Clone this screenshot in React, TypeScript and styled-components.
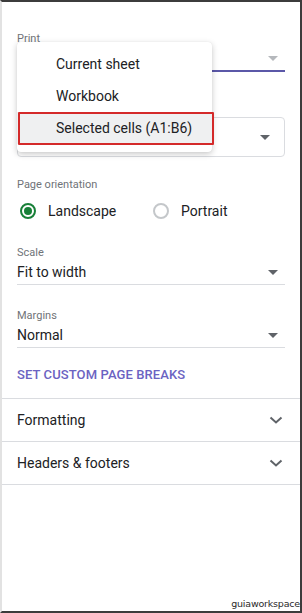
import styled, { createGlobalStyle } from 'styled-components';

const GlobalStyle = createGlobalStyle`
  html, body {
    margin: 0;
    padding: 0;
    background: #ffffff;
  }
  * {
    box-sizing: border-box;
  }
`;

const Frame = styled.div`
  position: relative;
  width: 302px;
  height: 613px;
  border-top: 2px solid #3c3c3c;
  border-right: 2px solid #3c3c3c;
  border-bottom: 2px solid #3c3c3c;
  border-left: 2px solid #e2e2e2;
  background: #ffffff;
  font-family: Roboto, 'Liberation Sans', Arial, sans-serif;
  color: #202124;
  overflow: hidden;
`;

const Content = styled.div`
  position: relative;
  padding: 30px 15px 0 15px;
`;

const Label = styled.div`
  font-size: 11px;
  line-height: 14px;
  color: #6f7378;
`;

const SelectRow = styled.div<{ $active?: boolean; $height?: number }>`
  display: flex;
  align-items: center;
  justify-content: space-between;
  height: ${(p) => p.$height ?? 25}px;
  padding-right: 7px;
  font-size: 14px;
  color: #202124;
  border-bottom: ${(p) => (p.$active ? '2px solid #5b58a8' : '1px solid #dadce0')};
`;

const OutlinedSelect = styled.div`
  display: flex;
  align-items: center;
  justify-content: flex-end;
  height: 40px;
  margin-top: 45px;
  padding-right: 14px;
  border: 1px solid #dadce0;
  border-radius: 4px;
`;

const Caret = styled.span<{ $dark?: boolean }>`
  width: 0;
  height: 0;
  border-left: 5px solid transparent;
  border-right: 5px solid transparent;
  border-top: 5px solid ${(p) => (p.$dark ? '#5f6368' : '#b5b8bc')};
`;

const Section = styled.div<{ $top: number }>`
  margin-top: ${(p) => p.$top}px;
`;

const RadioGroup = styled.div`
  display: grid;
  grid-template-columns: 133px auto;
  align-items: center;
  height: 24px;
  margin-top: 7px;
  padding-left: 3px;
`;

const RadioOption = styled.label`
  display: flex;
  align-items: center;
  gap: 12px;
  font-size: 14px;
  color: #202124;
`;

const RadioCircle = styled.span<{ $checked?: boolean }>`
  display: flex;
  align-items: center;
  justify-content: center;
  width: 16px;
  height: 16px;
  border-radius: 50%;
  border: 2px solid ${(p) => (p.$checked ? '#188038' : '#c4c7ca')};

  &::after {
    content: '';
    display: ${(p) => (p.$checked ? 'block' : 'none')};
    width: 8px;
    height: 8px;
    border-radius: 50%;
    background: #188038;
  }
`;

const LinkButton = styled.div`
  margin-top: 19px;
  padding-bottom: 15px;
  font-size: 13px;
  line-height: 16px;
  font-weight: 500;
  letter-spacing: 0.1px;
  color: #6b63c2;
`;

const Accordion = styled.div`
  border-top: 1px solid #dadce0;
`;

const AccordionRow = styled.div`
  display: flex;
  align-items: center;
  justify-content: space-between;
  height: 43px;
  padding: 0 17px 0 15px;
  border-bottom: 1px solid #dadce0;
  font-size: 14px;
  color: #202124;
`;

const Menu = styled.div`
  position: absolute;
  top: 40px;
  left: 15px;
  width: 195px;
  padding: 6px 0 8px;
  background: #ffffff;
  border-radius: 4px;
  box-shadow: 0 2px 6px rgba(0, 0, 0, 0.22), 0 0 1px rgba(0, 0, 0, 0.1);
  z-index: 2;
`;

const MenuItem = styled.div<{ $selected?: boolean }>`
  position: relative;
  display: flex;
  align-items: center;
  height: 32px;
  padding-left: 39px;
  font-size: 14px;
  color: #202124;
  background: ${(p) => (p.$selected ? '#eff0f1' : 'transparent')};

  &::after {
    content: '';
    display: ${(p) => (p.$selected ? 'block' : 'none')};
    position: absolute;
    top: 0;
    left: 1px;
    right: -2px;
    bottom: -1px;
    border: 2px solid #d42a2a;
    border-radius: 1px;
  }
`;

const Watermark = styled.div`
  position: absolute;
  right: 0;
  bottom: 1px;
  font-family: 'DejaVu Sans', 'Liberation Sans', sans-serif;
  font-size: 9.5px;
  line-height: 12px;
  color: #2a2a2a;
  letter-spacing: -0.2px;
`;

const Chevron = () => (
  <svg width="14" height="8" viewBox="0 0 14 8">
    <polyline points="1.5,1.5 7,6.5 12.5,1.5" fill="none" stroke="#5f6368" strokeWidth="2" />
  </svg>
);

const App: React.FC = () => {
  return (
    <>
      <GlobalStyle />
      <Frame>
        <Content>
          <Label>Print</Label>
          <SelectRow $active $height={26}>
            <span />
            <Caret />
          </SelectRow>

          <OutlinedSelect>
            <Caret $dark />
          </OutlinedSelect>

          <Section $top={21}>
            <Label>Page orientation</Label>
            <RadioGroup>
              <RadioOption>
                <RadioCircle $checked />
                Landscape
              </RadioOption>
              <RadioOption>
                <RadioCircle />
                Portrait
              </RadioOption>
            </RadioGroup>
          </Section>

          <Section $top={23}>
            <Label>Scale</Label>
            <SelectRow>
              <span>Fit to width</span>
              <Caret $dark />
            </SelectRow>
          </Section>

          <Section $top={24}>
            <Label>Margins</Label>
            <SelectRow>
              <span>Normal</span>
              <Caret $dark />
            </SelectRow>
          </Section>

          <LinkButton>SET CUSTOM PAGE BREAKS</LinkButton>

          <Menu>
            <MenuItem>Current sheet</MenuItem>
            <MenuItem>Workbook</MenuItem>
            <MenuItem $selected>Selected cells (A1:B6)</MenuItem>
          </Menu>
        </Content>

        <Accordion>
          <AccordionRow>
            <span>Formatting</span>
            <Chevron />
          </AccordionRow>
          <AccordionRow>
            <span>Headers &amp; footers</span>
            <Chevron />
          </AccordionRow>
        </Accordion>

        <Watermark>guiaworkspace</Watermark>
      </Frame>
    </>
  );
};

export default App;
